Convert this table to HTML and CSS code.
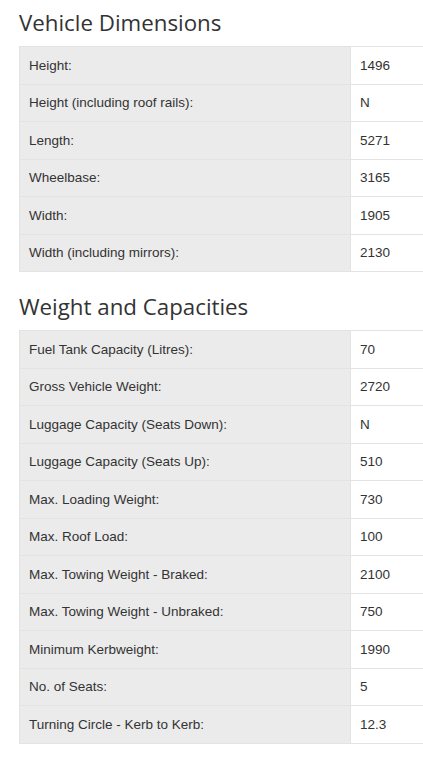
FILE: index.html
```html
<!DOCTYPE html>
<html lang="en">
<head>
<meta charset="UTF-8">
<meta name="viewport" content="width=device-width, initial-scale=1.0">
<title>Specifications</title>
<link rel="stylesheet" href="styles.css">
</head>
<body>
<div class="specs">
  <h2 class="spec-title">Vehicle Dimensions</h2>
  <table class="spec-table">
    <tr><td class="label">Height:</td><td class="value">1496</td></tr>
    <tr><td class="label">Height (including roof rails):</td><td class="value">N</td></tr>
    <tr><td class="label">Length:</td><td class="value">5271</td></tr>
    <tr><td class="label">Wheelbase:</td><td class="value">3165</td></tr>
    <tr><td class="label">Width:</td><td class="value">1905</td></tr>
    <tr><td class="label">Width (including mirrors):</td><td class="value">2130</td></tr>
  </table>

  <h2 class="spec-title">Weight and Capacities</h2>
  <table class="spec-table">
    <tr><td class="label">Fuel Tank Capacity (Litres):</td><td class="value">70</td></tr>
    <tr><td class="label">Gross Vehicle Weight:</td><td class="value">2720</td></tr>
    <tr><td class="label">Luggage Capacity (Seats Down):</td><td class="value">N</td></tr>
    <tr><td class="label">Luggage Capacity (Seats Up):</td><td class="value">510</td></tr>
    <tr><td class="label">Max. Loading Weight:</td><td class="value">730</td></tr>
    <tr><td class="label">Max. Roof Load:</td><td class="value">100</td></tr>
    <tr><td class="label">Max. Towing Weight - Braked:</td><td class="value">2100</td></tr>
    <tr><td class="label">Max. Towing Weight - Unbraked:</td><td class="value">750</td></tr>
    <tr><td class="label">Minimum Kerbweight:</td><td class="value">1990</td></tr>
    <tr><td class="label">No. of Seats:</td><td class="value">5</td></tr>
    <tr><td class="label">Turning Circle - Kerb to Kerb:</td><td class="value">12.3</td></tr>
  </table>
</div>
</body>
</html>
```

FILE: styles.css
```css
body {
  margin: 0;
  background-color: #fff;
  color: #333;
  font-family: 'Liberation Sans', Arial, sans-serif;
  font-size: 13.5px;
}

.specs {
  padding: 8px 0 0 19px;
}

.spec-title {
  margin: 0 0 8px 0;
  font-family: 'Open Sans', sans-serif;
  font-weight: 400;
  font-size: 22.3px;
  line-height: 30px;
  color: #333;
}

.spec-table {
  width: 100%;
  border-collapse: collapse;
  margin-bottom: 20px;
}

.spec-table td {
  height: 37.5px;
  padding: 0 9px;
  border: 1px solid #e3e3e3;
  vertical-align: middle;
  box-sizing: border-box;
}

.spec-table .label {
  width: 331px;
  background-color: #ebebeb;
}

.spec-table .value {
  border-right: 0;
  background-color: #fff;
}
```
